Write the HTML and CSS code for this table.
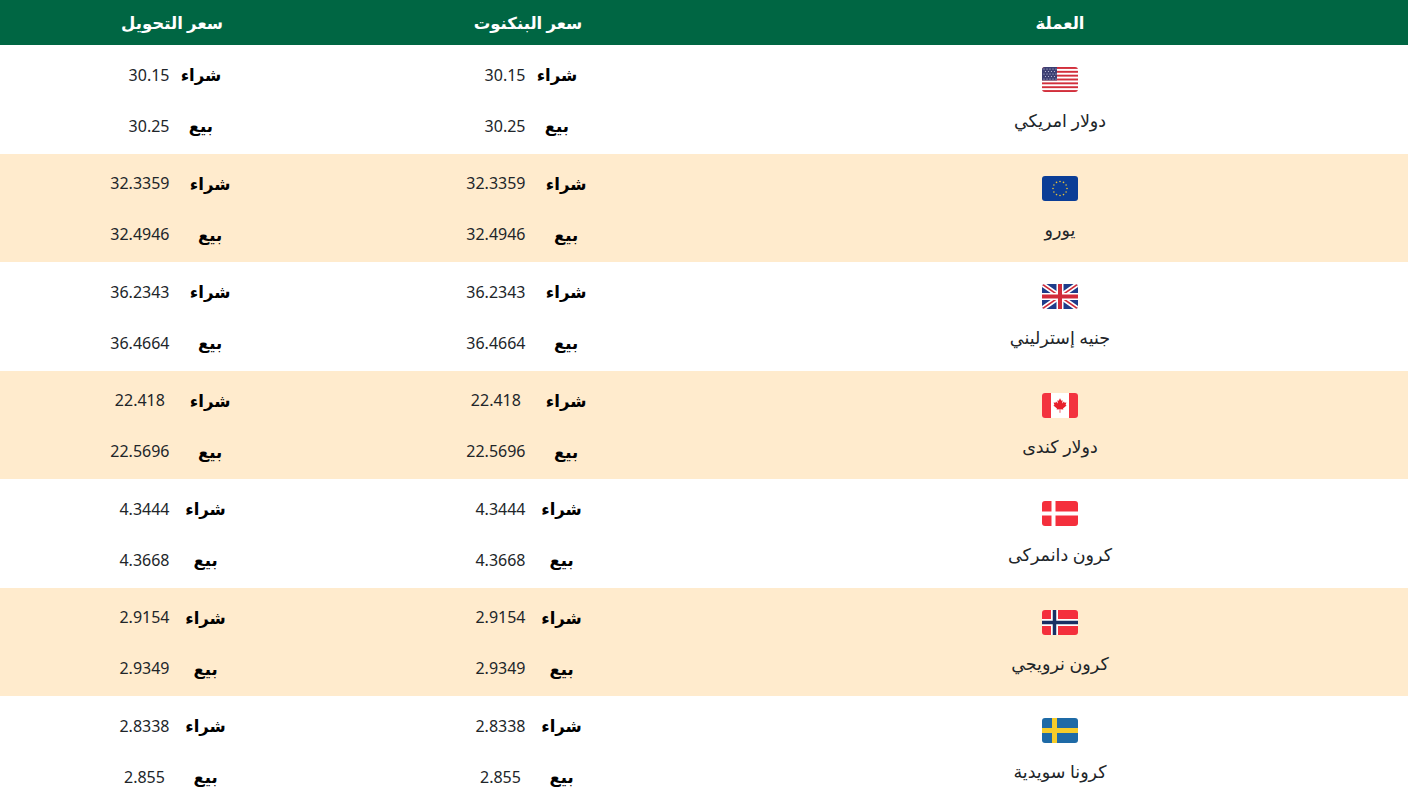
FILE: index.html
```html
<!DOCTYPE html>
<html lang="ar" dir="rtl">
<head>
<meta charset="utf-8">
<title>أسعار العملات</title>
<link rel="stylesheet" href="styles.css">
</head>
<body>
<table class="rates">
  <colgroup>
    <col class="c-cur">
    <col class="c-note">
    <col class="c-trans">
  </colgroup>
  <thead>
    <tr>
      <th>العملة</th>
      <th>سعر البنكنوت</th>
      <th>سعر التحويل</th>
    </tr>
  </thead>
  <tbody>
    <tr>
      <td class="cur">
        <svg class="flag" viewBox="0 0 36 25" aria-hidden="true">
          <rect width="36" height="25" fill="#fff"/>
          <g fill="#d22f3c">
            <rect y="0" width="36" height="1.92"/>
            <rect y="3.85" width="36" height="1.92"/>
            <rect y="7.69" width="36" height="1.92"/>
            <rect y="11.54" width="36" height="1.92"/>
            <rect y="15.38" width="36" height="1.92"/>
            <rect y="19.23" width="36" height="1.92"/>
            <rect y="23.08" width="36" height="1.92"/>
          </g>
          <rect width="15" height="13.46" fill="#3c3f73"/>
          <g fill="#c9cbe0">
            <circle cx="2" cy="2" r=".6"/><circle cx="5" cy="2" r=".6"/><circle cx="8" cy="2" r=".6"/><circle cx="11" cy="2" r=".6"/><circle cx="14" cy="2" r=".6"/>
            <circle cx="3.5" cy="4.5" r=".6"/><circle cx="6.5" cy="4.5" r=".6"/><circle cx="9.5" cy="4.5" r=".6"/><circle cx="12.5" cy="4.5" r=".6"/>
            <circle cx="2" cy="7" r=".6"/><circle cx="5" cy="7" r=".6"/><circle cx="8" cy="7" r=".6"/><circle cx="11" cy="7" r=".6"/><circle cx="14" cy="7" r=".6"/>
            <circle cx="3.5" cy="9.5" r=".6"/><circle cx="6.5" cy="9.5" r=".6"/><circle cx="9.5" cy="9.5" r=".6"/><circle cx="12.5" cy="9.5" r=".6"/>
            <circle cx="2" cy="12" r=".6"/><circle cx="5" cy="12" r=".6"/><circle cx="8" cy="12" r=".6"/><circle cx="11" cy="12" r=".6"/><circle cx="14" cy="12" r=".6"/>
          </g>
        </svg>
        <div class="name">دولار امريكي</div>
      </td>
      <td class="price"><div class="pair"><span class="lbl">شراء</span><span class="val">30.15</span><span class="lbl">بيع</span><span class="val">30.25</span></div></td>
      <td class="price"><div class="pair"><span class="lbl">شراء</span><span class="val">30.15</span><span class="lbl">بيع</span><span class="val">30.25</span></div></td>
    </tr>
    <tr>
      <td class="cur">
        <svg class="flag" viewBox="0 0 36 25" aria-hidden="true">
          <rect width="36" height="25" fill="#0b3d96"/>
          <g fill="#e9c436">
            <circle cx="18" cy="5.5" r=".8"/><circle cx="21.5" cy="6.4" r=".8"/><circle cx="24.1" cy="9" r=".8"/>
            <circle cx="25" cy="12.5" r=".8"/><circle cx="24.1" cy="16" r=".8"/><circle cx="21.5" cy="18.6" r=".8"/>
            <circle cx="18" cy="19.5" r=".8"/><circle cx="14.5" cy="18.6" r=".8"/><circle cx="11.9" cy="16" r=".8"/>
            <circle cx="11" cy="12.5" r=".8"/><circle cx="11.9" cy="9" r=".8"/><circle cx="14.5" cy="6.4" r=".8"/>
          </g>
        </svg>
        <div class="name">يورو</div>
      </td>
      <td class="price"><div class="pair"><span class="lbl">شراء</span><span class="val">32.3359</span><span class="lbl">بيع</span><span class="val">32.4946</span></div></td>
      <td class="price"><div class="pair"><span class="lbl">شراء</span><span class="val">32.3359</span><span class="lbl">بيع</span><span class="val">32.4946</span></div></td>
    </tr>
    <tr>
      <td class="cur">
        <svg class="flag" viewBox="0 0 36 25" aria-hidden="true">
          <rect width="36" height="25" fill="#1f3c8a"/>
          <path d="M0 0 L36 25 M36 0 L0 25" stroke="#fff" stroke-width="5"/>
          <path d="M0 0 L36 25 M36 0 L0 25" stroke="#d12b3a" stroke-width="1.6"/>
          <path d="M18 0 V25 M0 12.5 H36" stroke="#fff" stroke-width="7"/>
          <path d="M18 0 V25 M0 12.5 H36" stroke="#d12b3a" stroke-width="4"/>
        </svg>
        <div class="name">جنيه إسترليني</div>
      </td>
      <td class="price"><div class="pair"><span class="lbl">شراء</span><span class="val">36.2343</span><span class="lbl">بيع</span><span class="val">36.4664</span></div></td>
      <td class="price"><div class="pair"><span class="lbl">شراء</span><span class="val">36.2343</span><span class="lbl">بيع</span><span class="val">36.4664</span></div></td>
    </tr>
    <tr>
      <td class="cur">
        <svg class="flag" viewBox="0 0 36 25" aria-hidden="true">
          <rect width="36" height="25" fill="#fff"/>
          <rect width="9" height="25" fill="#f3333f"/>
          <rect x="27" width="9" height="25" fill="#f3333f"/>
          <path fill="#e8202c" d="M18 5.2 L19.3 7.8 L20.6 7.2 L20.1 10.6 L22 8.6 L22.5 9.8 L24.4 9.4 L23.6 12 L24.6 12.5 L21 15.4 L21.4 16.6 L18.3 16.2 L18.4 19.8 L17.6 19.8 L17.7 16.2 L14.6 16.6 L15 15.4 L11.4 12.5 L12.4 12 L11.6 9.4 L13.5 9.8 L14 8.6 L15.9 10.6 L15.4 7.2 L16.7 7.8 Z"/>
        </svg>
        <div class="name">دولار كندى</div>
      </td>
      <td class="price"><div class="pair"><span class="lbl">شراء</span><span class="val">22.418</span><span class="lbl">بيع</span><span class="val">22.5696</span></div></td>
      <td class="price"><div class="pair"><span class="lbl">شراء</span><span class="val">22.418</span><span class="lbl">بيع</span><span class="val">22.5696</span></div></td>
    </tr>
    <tr>
      <td class="cur">
        <svg class="flag" viewBox="0 0 36 25" aria-hidden="true">
          <rect width="36" height="25" fill="#f42f3c"/>
          <rect x="9.5" width="4" height="25" fill="#fff"/>
          <rect y="10.5" width="36" height="4" fill="#fff"/>
        </svg>
        <div class="name">كرون دانمركى</div>
      </td>
      <td class="price"><div class="pair"><span class="lbl">شراء</span><span class="val">4.3444</span><span class="lbl">بيع</span><span class="val">4.3668</span></div></td>
      <td class="price"><div class="pair"><span class="lbl">شراء</span><span class="val">4.3444</span><span class="lbl">بيع</span><span class="val">4.3668</span></div></td>
    </tr>
    <tr>
      <td class="cur">
        <svg class="flag" viewBox="0 0 36 25" aria-hidden="true">
          <rect width="36" height="25" fill="#f42f3c"/>
          <rect x="9" width="7" height="25" fill="#fff"/>
          <rect y="9" width="36" height="7" fill="#fff"/>
          <rect x="10.75" width="3.5" height="25" fill="#1a2f63"/>
          <rect y="10.75" width="36" height="3.5" fill="#1a2f63"/>
        </svg>
        <div class="name">كرون نرويجي</div>
      </td>
      <td class="price"><div class="pair"><span class="lbl">شراء</span><span class="val">2.9154</span><span class="lbl">بيع</span><span class="val">2.9349</span></div></td>
      <td class="price"><div class="pair"><span class="lbl">شراء</span><span class="val">2.9154</span><span class="lbl">بيع</span><span class="val">2.9349</span></div></td>
    </tr>
    <tr>
      <td class="cur">
        <svg class="flag" viewBox="0 0 36 25" aria-hidden="true">
          <rect width="36" height="25" fill="#1e6aa6"/>
          <rect x="10" width="5" height="25" fill="#f5cc2a"/>
          <rect y="10" width="36" height="5" fill="#f5cc2a"/>
        </svg>
        <div class="name">كرونا سويدية</div>
      </td>
      <td class="price"><div class="pair"><span class="lbl">شراء</span><span class="val">2.8338</span><span class="lbl">بيع</span><span class="val">2.855</span></div></td>
      <td class="price"><div class="pair"><span class="lbl">شراء</span><span class="val">2.8338</span><span class="lbl">بيع</span><span class="val">2.855</span></div></td>
    </tr>
  </tbody>
</table>
</body>
</html>
```
FILE: styles.css
```css
html, body {
  margin: 0;
  padding: 0;
  background: #fff;
}
body {
  font-family: "Noto Sans", "DejaVu Sans", sans-serif;
  color: #212529;
  direction: rtl;
}
.rates {
  width: 100%;
  border-collapse: collapse;
  table-layout: fixed;
}
.c-cur { width: 696px; }
.c-note { width: 368px; }
.c-trans { width: 344px; }

.rates th {
  background: #006643;
  color: #fff;
  height: 45px;
  padding: 0;
  font-size: 16.5px;
  font-weight: 700;
  text-align: center;
  vertical-align: middle;
}
.rates td {
  padding: 0;
  text-align: center;
  vertical-align: middle;
}
.rates tbody tr:nth-child(even) td {
  background: #ffebcd;
}
.cur {
  padding: 21.25px 0 !important;
}
.flag {
  display: block;
  width: 36px;
  height: 25px;
  margin: 1px auto 16px;
  border-radius: 3px;
}
.name {
  font-size: 17.5px;
  line-height: 24px;
}
.pair {
  display: inline-grid;
  grid-template-columns: 1fr 1fr;
  grid-auto-rows: 51px;
  align-items: center;
  column-gap: 11px;
  padding-left: 6px;
  padding-top: 2px;
}
.lbl {
  font-weight: 700;
  font-size: 16.5px;
  color: #000;
}
.val {
  font-size: 16px;
}
```
